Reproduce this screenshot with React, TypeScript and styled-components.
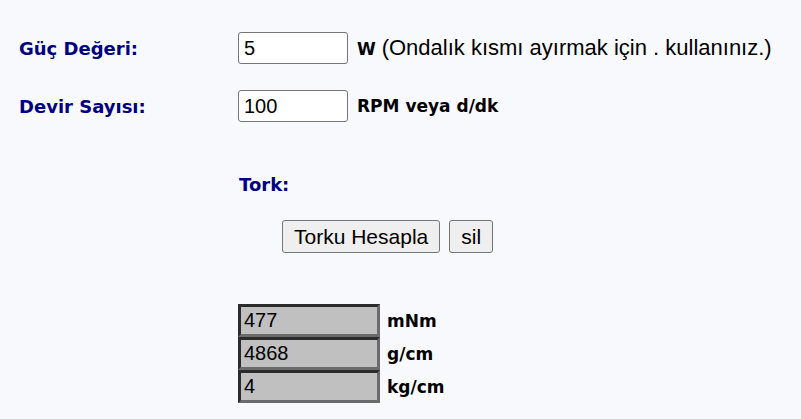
import React from "react";
import styled, { createGlobalStyle } from "styled-components";

const Global = createGlobalStyle`
  html, body { margin: 0; padding: 0; background: #f8f9fc; }
  body { font-family: "Liberation Sans", Arial, sans-serif; }
`;

const Page = styled.div`
  padding: 32px 0 0 19px;
  display: flex;
  flex-direction: column;
`;

const Row = styled.div<{ $top?: number }>`
  display: flex;
  align-items: center;
  height: 32px;
  margin-top: ${(p) => p.$top ?? 0}px;
`;

const Label = styled.div`
  width: 219px;
  flex: none;
  font-family: "DejaVu Sans", Verdana, sans-serif;
  font-weight: bold;
  font-size: 18px;
  color: #000080;
`;

const TorkLabel = styled(Label)`
  width: auto;
  margin-left: 1px;
`;

const TextInput = styled.input`
  box-sizing: border-box;
  width: 110px;
  height: 32px;
  border: 1px solid #767676;
  border-radius: 3px;
  background: #fff;
  padding: 0 5px;
  font-family: "Liberation Sans", Arial, sans-serif;
  font-size: 20px;
  color: #000;
  outline: none;
`;

const Unit = styled.span`
  margin-left: 9px;
  font-family: "DejaVu Sans", Verdana, sans-serif;
  font-weight: bold;
  font-size: 17px;
  color: #000;
`;

const Note = styled.span`
  font-family: "Liberation Sans", Arial, sans-serif;
  font-weight: normal;
  font-size: 22px;
`;

const Buttons = styled.div`
  display: flex;
  gap: 9px;
  margin: 20px 0 0 263px;
`;

const Button = styled.button`
  box-sizing: border-box;
  height: 33px;
  padding: 0 11px;
  border: 1px solid #767676;
  border-radius: 3px;
  background: #efefef;
  font-family: "Liberation Sans", Arial, sans-serif;
  font-size: 21px;
  color: #000;
`;

const Outputs = styled.div`
  display: flex;
  flex-direction: column;
  margin: 51px 0 0 219px;
`;

const OutRow = styled.div`
  display: flex;
  align-items: center;
`;

const OutBox = styled.input`
  box-sizing: border-box;
  width: 142px;
  height: 33px;
  border: 3px solid;
  border-color: #2b2b2b #6b6b6b #6b6b6b #2b2b2b;
  background: #c0c0c0;
  padding: 0 3px;
  font-family: "Liberation Sans", Arial, sans-serif;
  font-size: 20px;
  color: #000;
  outline: none;
`;

const OutUnit = styled(Unit)`
  margin-left: 7px;
`;

export default function App() {
  const outputs = [
    { v: "477", u: "mNm" },
    { v: "4868", u: "g/cm" },
    { v: "4", u: "kg/cm" },
  ];
  return (
    <>
      <Global />
      <Page>
        <Row>
          <Label>Güç Değeri:</Label>
          <TextInput defaultValue="5" />
          <Unit>
            W <Note>(Ondalık kısmı ayırmak için . kullanınız.)</Note>
          </Unit>
        </Row>
        <Row $top={26}>
          <Label>Devir Sayısı:</Label>
          <TextInput defaultValue="100" />
          <Unit>RPM veya d/dk</Unit>
        </Row>
        <Row $top={46}>
          <Label />
          <TorkLabel>Tork:</TorkLabel>
        </Row>
        <Buttons>
          <Button>Torku Hesapla</Button>
          <Button>sil</Button>
        </Buttons>
        <Outputs>
          {outputs.map((o) => (
            <OutRow key={o.u}>
              <OutBox readOnly defaultValue={o.v} />
              <OutUnit>{o.u}</OutUnit>
            </OutRow>
          ))}
        </Outputs>
      </Page>
    </>
  );
}
